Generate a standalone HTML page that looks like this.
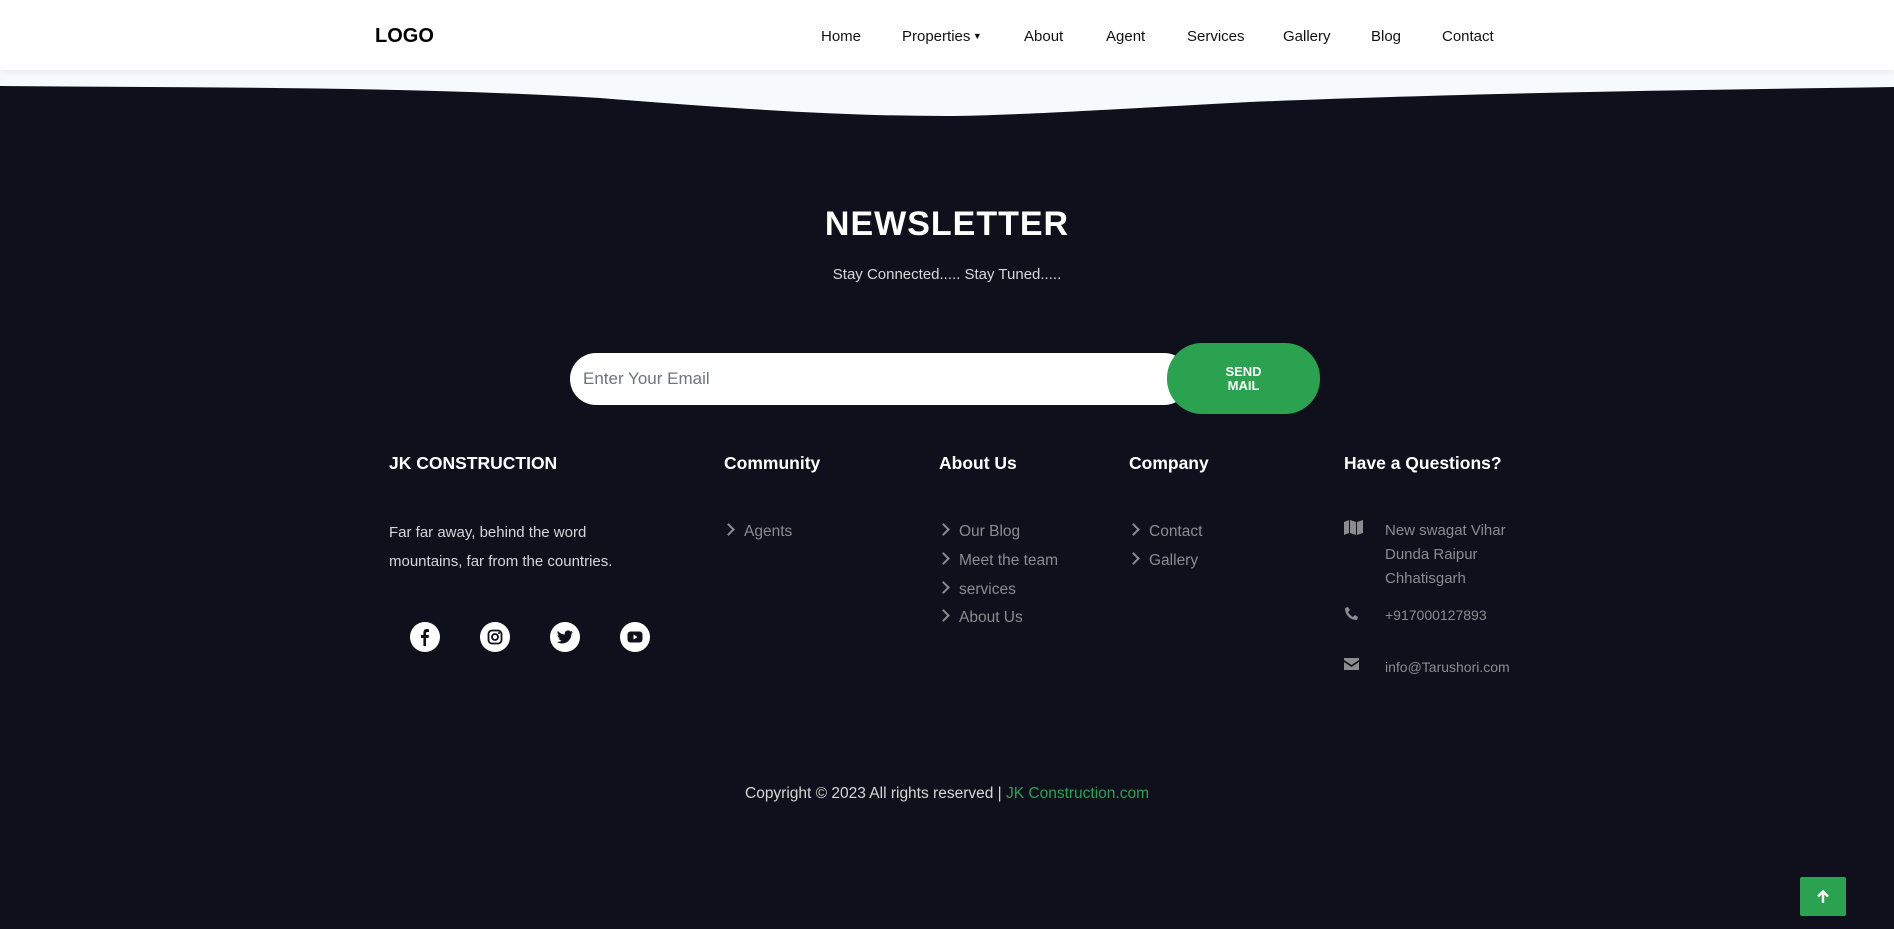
<!DOCTYPE html>
<html><head><meta charset="utf-8"><style>
*{margin:0;padding:0;box-sizing:border-box}
body{width:1894px;height:929px;overflow:hidden;background:#10101c;font-family:"Liberation Sans",sans-serif;position:relative}
.hdr{position:absolute;left:0;top:0;width:1894px;height:70px;background:#fff;box-shadow:0 2px 8px rgba(0,0,0,.06);z-index:2}
.a{position:absolute;white-space:nowrap}
.nav{font-size:15px;color:#111;top:28px}
.h{color:#fff;font-weight:bold;font-size:17.5px;top:453px}
.l{color:#8b8b90;font-size:15.5px}
.l:before{content:"";display:inline-block;width:7px;height:7px;border-right:2.5px solid #8b8b90;border-top:2.5px solid #8b8b90;transform:rotate(45deg);margin:0 11px 2px 0}
.soc{position:absolute;top:622px;width:30px;height:30px;border-radius:50%;background:#fff}
.soc svg{position:absolute;left:6px;top:6px}
</style></head><body>
<div class="hdr">
<div class="a" style="left:375px;top:25px;font-size:20px;font-weight:bold;color:#000">LOGO</div>
<div class="a nav" style="left:821px">Home</div>
<div class="a nav" style="left:902px">Properties<span style="font-size:9px;vertical-align:2px"> ▼</span></div>
<div class="a nav" style="left:1024px">About</div>
<div class="a nav" style="left:1106px">Agent</div>
<div class="a nav" style="left:1187px">Services</div>
<div class="a nav" style="left:1283px">Gallery</div>
<div class="a nav" style="left:1371px">Blog</div>
<div class="a nav" style="left:1442px">Contact</div>
</div>
<svg class="a" style="left:0;top:70px" width="1894" height="50"><rect width="1894" height="50" fill="#10101c"/><path d="M0 0H1894V17C1700 20 1500 22 1250 32 C1100 40 1000 46 947 46 C850 46 750 40 600 28 C400 16 200 18 0 16Z" fill="#f6fafd"/></svg>
<div class="a" style="left:0;width:1894px;text-align:center;top:205px;color:#fff;font-size:34px;font-weight:bold;letter-spacing:1px">NEWSLETTER</div>
<div class="a" style="left:0;width:1894px;text-align:center;top:266px;color:#d8d8d8;font-size:15px">Stay Connected..... Stay Tuned.....</div>
<div class="a" style="left:570px;top:353px;width:620px;height:52px;background:#fff;border-radius:26px"><span style="position:absolute;left:13px;top:16px;color:#6c757d;font-size:17px">Enter Your Email</span></div>
<div class="a" style="left:1167px;top:343px;width:153px;height:71px;background:#2ba24f;border-radius:35px;color:#fff;font-weight:bold;font-size:13px;text-align:center;line-height:14px;padding-top:22px">SEND<br>MAIL</div>
<div class="a h" style="left:389px">JK CONSTRUCTION</div>
<div class="a h" style="left:724px">Community</div>
<div class="a h" style="left:939px">About Us</div>
<div class="a h" style="left:1129px">Company</div>
<div class="a h" style="left:1344px">Have a Questions?</div>
<div class="a" style="left:389px;top:518px;color:#d6d6d6;font-size:15px;line-height:29px">Far far away, behind the word<br>mountains, far from the countries.</div>
<div class="soc" style="left:410px"><svg width="18" height="18" viewBox="0 0 18 18"><path d="M10 18V10h2.5l.4-3H10V5.3c0-.8.3-1.3 1.4-1.3H13V1.3C12.6 1.2 11.8 1 10.9 1 8.8 1 7.4 2.3 7.4 4.6V7H5v3h2.4v8z" fill="#10101c"/></svg></div>
<div class="soc" style="left:480px"><svg width="18" height="18" viewBox="0 0 18 18"><rect x="2.5" y="2.5" width="13" height="13" rx="3.5" fill="none" stroke="#10101c" stroke-width="1.8"/><circle cx="9" cy="9" r="3" fill="none" stroke="#10101c" stroke-width="1.8"/><circle cx="13" cy="5" r="1" fill="#10101c"/></svg></div>
<div class="soc" style="left:550px"><svg width="18" height="18" viewBox="0 0 18 18"><path d="M17 4c-.6.3-1.2.4-1.9.5.7-.4 1.2-1 1.4-1.8-.6.4-1.3.6-2.1.8A3.3 3.3 0 0 0 8.8 6.5 9.3 9.3 0 0 1 2 3a3.3 3.3 0 0 0 1 4.4c-.5 0-1-.2-1.5-.4 0 1.6 1.1 2.9 2.6 3.2-.5.1-1 .2-1.5.1.4 1.3 1.600 2.3 3.1 2.3A6.6 6.6 0 0 1 1 14c1.5.9 3.2 1.5 5 1.5 6 0 9.4-5 9.4-9.4v-.4C16 5.3 16.6 4.7 17 4z" fill="#10101c"/></svg></div>
<div class="soc" style="left:620px"><svg width="18" height="18" viewBox="0 0 18 18"><rect x="1.5" y="3.5" width="15" height="11" rx="3" fill="#10101c"/><path d="M7.5 6.5v5l4-2.5z" fill="#fff"/></svg></div>
<div class="a l" style="left:724px;top:523px">Agents</div>
<div class="a l" style="left:939px;top:523px">Our Blog</div>
<div class="a l" style="left:939px;top:552px">Meet the team</div>
<div class="a l" style="left:939px;top:581px">services</div>
<div class="a l" style="left:939px;top:609px">About Us</div>
<div class="a l" style="left:1129px;top:523px">Contact</div>
<div class="a l" style="left:1129px;top:552px">Gallery</div>
<svg class="a" style="left:1344px;top:520px" width="19" height="15" viewBox="0 0 19 15"><path d="M0 2l5-2v13l-5 2zM6 0l6 2v13l-6-2zM13 2l6-2v13l-6 2z" fill="#8b8b90"/></svg>
<div class="a" style="left:1385px;top:519px;color:#8b8b90;font-size:15px;line-height:24px">New swagat Vihar<br>Dunda Raipur<br>Chhatisgarh</div>
<svg class="a" style="left:1344px;top:606px" width="15" height="15" viewBox="0 0 15 15"><path d="M14 11l-3-2-2 2C7 10 5 8 4 6l2-2-2-3L1 2C1 9 6 14 13 14z" fill="#8b8b90"/></svg>
<div class="a" style="left:1385px;top:607px;color:#8b8b90;font-size:14px">+917000127893</div>
<svg class="a" style="left:1344px;top:658px" width="15" height="12" viewBox="0 0 15 12"><path d="M0 0h15v2L7.5 7 0 2zM0 4l7.5 5L15 4v8H0z" fill="#8b8b90"/></svg>
<div class="a" style="left:1385px;top:659px;color:#8b8b90;font-size:14px">info@Tarushori.com</div>
<div class="a" style="left:0;width:1894px;text-align:center;top:785px;color:#d6d6d6;font-size:15.5px">Copyright © 2023 All rights reserved | <span style="color:#2ba24f">JK Construction.com</span></div>
<div class="a" style="left:1800px;top:877px;width:46px;height:39px;background:#2ba24f;border-radius:2px"><svg style="position:absolute;left:15px;top:12px" width="16" height="16" viewBox="0 0 16 16"><path d="M8 14V3M3 7.5L8 2.5l5 5" stroke="#fff" stroke-width="2.4" fill="none"/></svg></div>
</body></html>
